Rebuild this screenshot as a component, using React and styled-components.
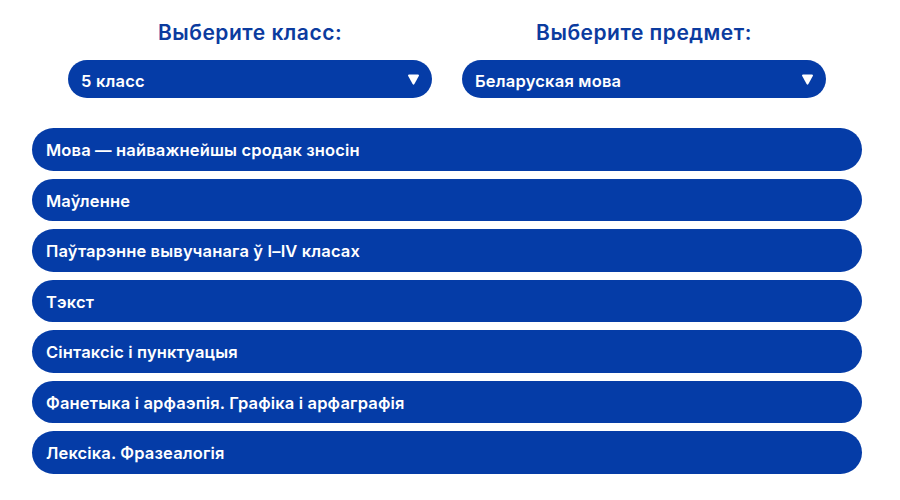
import React, { useState } from "react";
import styled, { createGlobalStyle } from "styled-components";

const GlobalStyle = createGlobalStyle`
  body {
    margin: 0;
    background: #ffffff;
    font-family: "Inter", "Open Sans", sans-serif;
  }
`;

const BLUE = "#053ca7";

const classes = ["5 класс", "6 класс", "7 класс", "8 класс", "9 класс"];
const subjects = ["Беларуская мова", "Русский язык"];

const topics = [
  "Мова — найважнейшы сродак зносін",
  "Маўленне",
  "Паўтарэнне вывучанага ў I–IV класах",
  "Тэкст",
  "Сінтаксіс і пунктуацыя",
  "Фанетыка і арфаэпія. Графіка і арфаграфія",
  "Лексіка. Фразеалогія",
];

const Arrow = () => (
  <svg width="13" height="13" viewBox="0 0 13 13">
    <path
      d="M2 1.5 H11 Q12.6 1.5 11.8 3 L7.4 11 Q6.5 12.4 5.6 11 L1.2 3 Q0.4 1.5 2 1.5 Z"
      fill="#ffffff"
    />
  </svg>
);

const Picker = ({ label, value }) => (
  <PickerColumn>
    <PickerLabel>{label}</PickerLabel>
    <SelectBox>
      <SelectValue>{value}</SelectValue>
      <Arrow />
    </SelectBox>
  </PickerColumn>
);

const App = () => {
  const [grade] = useState(classes[0]);
  const [subject] = useState(subjects[0]);

  return (
    <Page>
      <GlobalStyle />
      <Pickers>
        <Picker label="Выберите класс:" value={grade} />
        <Picker label="Выберите предмет:" value={subject} />
      </Pickers>
      <TopicList>
        {topics.map((t) => (
          <Topic key={t}>{t}</Topic>
        ))}
      </TopicList>
    </Page>
  );
};

const Page = styled.div`
  width: 830px;
  padding: 20px 0 0 32px;
`;

const Pickers = styled.div`
  display: grid;
  grid-template-columns: 364px 364px;
  column-gap: 30px;
  padding: 0 36px;
`;

const PickerColumn = styled.div`
  display: flex;
  flex-direction: column;
  align-items: stretch;
`;

const PickerLabel = styled.div`
  text-align: center;
  color: #0b3b9f;
  font-size: 21px;
  font-weight: 600;
  line-height: 26px;
  letter-spacing: 0.5px;
  margin-bottom: 14px;
`;

const SelectBox = styled.div`
  height: 38px;
  border-radius: 19px;
  background: ${BLUE};
  display: flex;
  align-items: center;
  justify-content: space-between;
  padding: 3px 12px 0 13px;
  box-sizing: border-box;
  cursor: pointer;

  svg {
    margin-top: -2px;
  }
`;

const SelectValue = styled.span`
  color: #ffffff;
  font-size: 16.5px;
  font-weight: 600;
  letter-spacing: 0.2px;
`;

const TopicList = styled.div`
  display: flex;
  flex-direction: column;
  gap: 8px;
  margin-top: 30px;
`;

const Topic = styled.div`
  height: 42.5px;
  border-radius: 22px;
  background: ${BLUE};
  color: #ffffff;
  display: flex;
  align-items: center;
  padding: 2px 0 0 14px;
  box-sizing: border-box;
  font-size: 16.5px;
  font-weight: 600;
  letter-spacing: 0.15px;
  cursor: pointer;
`;

export default App;
